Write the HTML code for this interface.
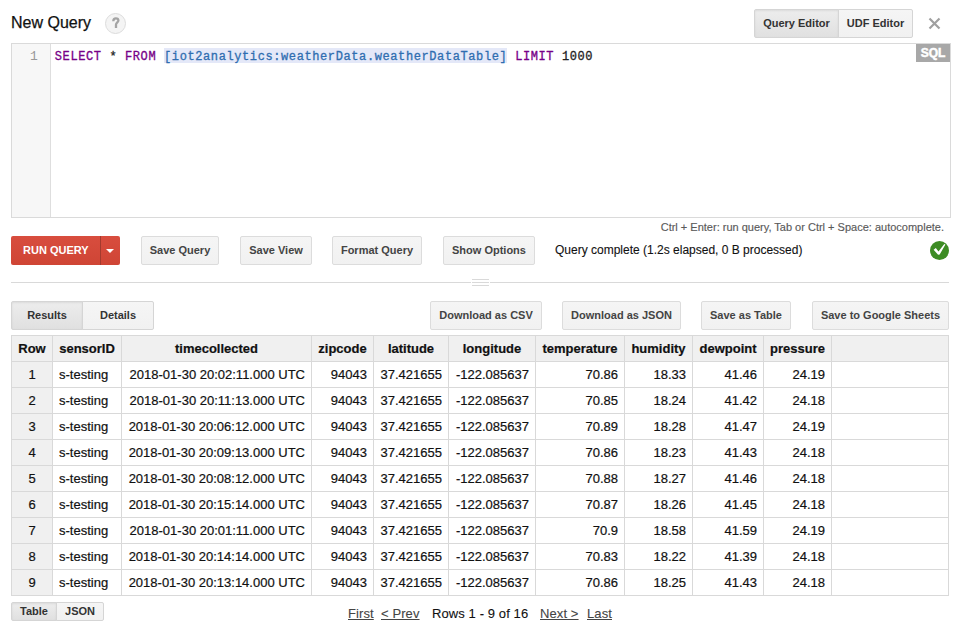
<!DOCTYPE html>
<html><head><meta charset="utf-8">
<style>
*{box-sizing:border-box}
html,body{margin:0;padding:0}
body{width:958px;height:641px;overflow:hidden;background:#fff;position:relative;font-family:"Liberation Sans",sans-serif;color:#222}
div{position:absolute}
.title{-webkit-text-stroke:0.25px #111;left:11px;top:15px;font-size:16px;line-height:16px;color:#111;white-space:nowrap}
.help{left:105px;top:13px;width:21px;height:21px;border-radius:50%;border:1px solid #dcdcdc;background:#f4f4f4;color:#9a9a9a;font-weight:bold;font-size:13px;line-height:19px;text-align:center}
.btn{background:linear-gradient(#f5f5f5,#f1f1f1);border:1px solid #dcdcdc;border-radius:2px;color:#444;font-weight:bold;font-size:11px;text-align:center;white-space:nowrap}
.seg{background:linear-gradient(#f5f5f5,#f1f1f1);border:1px solid #d5d5d5;color:#333;font-weight:bold;font-size:11px;text-align:center;white-space:nowrap}
.seg.on{background:linear-gradient(#ededed,#e0e0e0);box-shadow:inset 0 1px 2px rgba(0,0,0,.08)}
.editor{left:11px;top:43px;width:940px;height:175px;border:1px solid #dadada;background:#fff}
.gutter{left:0;top:0;width:39px;height:173px;background:#f7f7f7;border-right:1px solid #dedede}
.lnum{left:19px;top:5px;font-family:"Liberation Mono",monospace;font-size:13px;line-height:15px;color:#999}
.code{left:54.8px;top:49px;font-family:"Liberation Mono",monospace;font-size:12px;letter-spacing:0.6px;line-height:16px;white-space:pre;color:#222;-webkit-text-stroke:0.3px currentColor}
.kw{color:#770088}
.hl{color:#2f6db0}
.hlbg{left:164px;top:48px;width:343px;height:15px;background:#e4e8f8}
.sql{left:916px;top:44px;width:34px;height:18px;background:#a8a8a8;color:#fff;font-weight:bold;font-size:12px;line-height:18px;text-align:center;-webkit-text-stroke:0.5px #fff}
.hint{-webkit-text-stroke:0.15px #5a5a5a;left:559px;width:385px;top:222px;font-size:11px;line-height:11px;color:#5a5a5a;text-align:right;white-space:nowrap}
.run{left:11px;top:236px;width:109px;height:29px;background:linear-gradient(#d84d3e,#cf4535);border-radius:2px;color:#fff;font-weight:bold;font-size:11px;line-height:29px;white-space:nowrap}
.status{-webkit-text-stroke:0.1px #111;left:555px;top:244px;font-size:12px;line-height:12px;color:#111;white-space:nowrap}
.check{left:930px;top:241px;width:19px;height:19px;border-radius:50%;background:#3d8c24}
.ln{background:#d9d9d9}
.bg{}
.cell{-webkit-text-stroke:0.2px #111;font-size:13px;line-height:28px;color:#111;white-space:nowrap;height:26px;padding-top:0}
.cell.b{font-weight:bold}
.small{background:#f3f3f3;border:1px solid #d5d5d5;color:#333;font-weight:bold;font-size:11px;text-align:center;white-space:nowrap}
.pg{-webkit-text-stroke:0.1px currentColor;letter-spacing:0.1px;top:607px;font-size:13px;line-height:13px;color:#111;white-space:nowrap}
.lk{color:#444;text-decoration:underline;text-underline-offset:1px}
</style></head><body>
<div class="title">New Query</div>
<div class="help"></div><svg style="position:absolute;left:0;top:0" width="140" height="40"><path d="M113.3 21.2 C113.3 19.3 114.4 18.3 115.9 18.3 C117.5 18.3 118.4 19.3 118.4 20.5 C118.4 22.1 116.2 22.6 116 24.5 L116 28" stroke="#a4a4a4" stroke-width="2.3" fill="none"/></svg>
<div class="seg on" style="left:754px;top:9px;width:85px;height:29px;line-height:27px;border-radius:2px 0 0 2px">Query Editor</div>
<div class="seg" style="left:838px;top:9px;width:75px;height:29px;line-height:27px;border-radius:0 2px 2px 0">UDF Editor</div>
<svg style="position:absolute;left:926px;top:15px" width="17" height="17" viewBox="0 0 17 17"><path d="M3.5 3.5 L13.5 13.5 M13.5 3.5 L3.5 13.5" stroke="#a0a0a0" stroke-width="2.2"/></svg>
<div class="editor">
  <div class="gutter"></div>
</div>
<div class="lnum" style="left:30px;top:49px">1</div>
<div class="hlbg"></div>
<div class="code"><span class="kw">SELECT</span> * <span class="kw">FROM</span> <span class="hl">[iot2analytics:weatherData.weatherDataTable]</span> <span class="kw">LIMIT</span> 1000</div>
<div class="sql">SQL</div>
<div class="hint">Ctrl + Enter: run query, Tab or Ctrl + Space: autocomplete.</div>
<div class="run"><span style="position:absolute;left:12px;top:0">RUN QUERY</span><div style="left:89px;top:0;width:1px;height:29px;background:#a33a2e"></div>
<svg style="position:absolute;left:95px;top:12px" width="9" height="6" viewBox="0 0 9 6"><path d="M0 1 L8 1 L4 5 Z" fill="#fff"/></svg></div>
<div class="btn" style="left:141px;top:236px;width:78px;height:29px;line-height:27px">Save Query</div>
<div class="btn" style="left:240px;top:236px;width:72px;height:29px;line-height:27px">Save View</div>
<div class="btn" style="left:332px;top:236px;width:90px;height:29px;line-height:27px">Format Query</div>
<div class="btn" style="left:443px;top:236px;width:92px;height:29px;line-height:27px">Show Options</div>
<div class="btn" style="left:430px;top:301px;width:112px;height:29px;line-height:27px">Download as CSV</div>
<div class="btn" style="left:562px;top:301px;width:119px;height:29px;line-height:27px">Download as JSON</div>
<div class="btn" style="left:701px;top:301px;width:90px;height:29px;line-height:27px">Save as Table</div>
<div class="btn" style="left:812px;top:301px;width:137px;height:29px;line-height:27px">Save to Google Sheets</div>
<div class="status">Query complete (1.2s elapsed, 0 B processed)</div>
<div class="check"><svg style="position:absolute;left:0;top:0" width="19" height="19" viewBox="0 0 19 19"><path d="M3.6 8.7 L5.8 7.1 L8.5 10.5 L14.3 2.9 L15.4 3.4 L9.7 13.5 L8.1 13.7 Z" fill="#fff"/></svg></div>
<div class="ln" style="left:11px;top:282px;width:460px;height:1px"></div>
<div class="ln" style="left:490px;top:282px;width:459px;height:1px"></div>
<div class="ln" style="left:472px;top:279px;width:17px;height:1px"></div>
<div class="ln" style="left:472px;top:282px;width:17px;height:1px"></div>
<div class="ln" style="left:472px;top:285px;width:17px;height:1px"></div>
<div class="seg on" style="left:11px;top:301px;width:72px;height:29px;line-height:27px;border-radius:2px 0 0 2px">Results</div>
<div class="seg" style="left:82px;top:301px;width:72px;height:29px;line-height:27px;border-radius:0 2px 2px 0">Details</div>
<div class="bg" style="left:11px;top:335px;width:938px;height:26px;background:#f0f0f0"></div>
<div class="bg" style="left:11px;top:335px;width:42px;height:261px;background:#f0f0f0"></div>
<div class="ln" style="left:11px;top:335px;width:938px;height:1px"></div>
<div class="ln" style="left:11px;top:361px;width:938px;height:1px"></div>
<div class="ln" style="left:11px;top:387px;width:938px;height:1px"></div>
<div class="ln" style="left:11px;top:413px;width:938px;height:1px"></div>
<div class="ln" style="left:11px;top:439px;width:938px;height:1px"></div>
<div class="ln" style="left:11px;top:465px;width:938px;height:1px"></div>
<div class="ln" style="left:11px;top:491px;width:938px;height:1px"></div>
<div class="ln" style="left:11px;top:517px;width:938px;height:1px"></div>
<div class="ln" style="left:11px;top:543px;width:938px;height:1px"></div>
<div class="ln" style="left:11px;top:569px;width:938px;height:1px"></div>
<div class="ln" style="left:11px;top:595px;width:938px;height:1px"></div>
<div class="ln" style="left:11px;top:335px;width:1px;height:261px"></div>
<div class="ln" style="left:52px;top:335px;width:1px;height:261px"></div>
<div class="ln" style="left:121px;top:335px;width:1px;height:261px"></div>
<div class="ln" style="left:311px;top:335px;width:1px;height:261px"></div>
<div class="ln" style="left:373px;top:335px;width:1px;height:261px"></div>
<div class="ln" style="left:448px;top:335px;width:1px;height:261px"></div>
<div class="ln" style="left:535px;top:335px;width:1px;height:261px"></div>
<div class="ln" style="left:624px;top:335px;width:1px;height:261px"></div>
<div class="ln" style="left:692px;top:335px;width:1px;height:261px"></div>
<div class="ln" style="left:763px;top:335px;width:1px;height:261px"></div>
<div class="ln" style="left:831px;top:335px;width:1px;height:261px"></div>
<div class="ln" style="left:948px;top:335px;width:1px;height:261px"></div>
<div class="cell b" style="left:12px;width:40px;text-align:center;top:335px">Row</div>
<div class="cell b" style="left:53px;width:68px;text-align:center;top:335px">sensorID</div>
<div class="cell b" style="left:122px;width:189px;text-align:center;top:335px">timecollected</div>
<div class="cell b" style="left:312px;width:61px;text-align:center;top:335px">zipcode</div>
<div class="cell b" style="left:374px;width:74px;text-align:center;top:335px">latitude</div>
<div class="cell b" style="left:449px;width:86px;text-align:center;top:335px">longitude</div>
<div class="cell b" style="left:536px;width:88px;text-align:center;top:335px">temperature</div>
<div class="cell b" style="left:625px;width:67px;text-align:center;top:335px">humidity</div>
<div class="cell b" style="left:693px;width:70px;text-align:center;top:335px">dewpoint</div>
<div class="cell b" style="left:764px;width:67px;text-align:center;top:335px">pressure</div>
<div class="cell" style="left:12px;width:40px;text-align:center;top:361px">1</div>
<div class="cell" style="left:59px;width:61px;text-align:left;top:361px">s-testing</div>
<div class="cell" style="left:122px;width:183px;text-align:right;top:361px">2018-01-30 20:02:11.000 UTC</div>
<div class="cell" style="left:312px;width:55px;text-align:right;top:361px">94043</div>
<div class="cell" style="left:374px;width:68px;text-align:right;top:361px">37.421655</div>
<div class="cell" style="left:449px;width:80px;text-align:right;top:361px">-122.085637</div>
<div class="cell" style="left:536px;width:82px;text-align:right;top:361px">70.86</div>
<div class="cell" style="left:625px;width:61px;text-align:right;top:361px">18.33</div>
<div class="cell" style="left:693px;width:64px;text-align:right;top:361px">41.46</div>
<div class="cell" style="left:764px;width:61px;text-align:right;top:361px">24.19</div>
<div class="cell" style="left:12px;width:40px;text-align:center;top:387px">2</div>
<div class="cell" style="left:59px;width:61px;text-align:left;top:387px">s-testing</div>
<div class="cell" style="left:122px;width:183px;text-align:right;top:387px">2018-01-30 20:11:13.000 UTC</div>
<div class="cell" style="left:312px;width:55px;text-align:right;top:387px">94043</div>
<div class="cell" style="left:374px;width:68px;text-align:right;top:387px">37.421655</div>
<div class="cell" style="left:449px;width:80px;text-align:right;top:387px">-122.085637</div>
<div class="cell" style="left:536px;width:82px;text-align:right;top:387px">70.85</div>
<div class="cell" style="left:625px;width:61px;text-align:right;top:387px">18.24</div>
<div class="cell" style="left:693px;width:64px;text-align:right;top:387px">41.42</div>
<div class="cell" style="left:764px;width:61px;text-align:right;top:387px">24.18</div>
<div class="cell" style="left:12px;width:40px;text-align:center;top:413px">3</div>
<div class="cell" style="left:59px;width:61px;text-align:left;top:413px">s-testing</div>
<div class="cell" style="left:122px;width:183px;text-align:right;top:413px">2018-01-30 20:06:12.000 UTC</div>
<div class="cell" style="left:312px;width:55px;text-align:right;top:413px">94043</div>
<div class="cell" style="left:374px;width:68px;text-align:right;top:413px">37.421655</div>
<div class="cell" style="left:449px;width:80px;text-align:right;top:413px">-122.085637</div>
<div class="cell" style="left:536px;width:82px;text-align:right;top:413px">70.89</div>
<div class="cell" style="left:625px;width:61px;text-align:right;top:413px">18.28</div>
<div class="cell" style="left:693px;width:64px;text-align:right;top:413px">41.47</div>
<div class="cell" style="left:764px;width:61px;text-align:right;top:413px">24.19</div>
<div class="cell" style="left:12px;width:40px;text-align:center;top:439px">4</div>
<div class="cell" style="left:59px;width:61px;text-align:left;top:439px">s-testing</div>
<div class="cell" style="left:122px;width:183px;text-align:right;top:439px">2018-01-30 20:09:13.000 UTC</div>
<div class="cell" style="left:312px;width:55px;text-align:right;top:439px">94043</div>
<div class="cell" style="left:374px;width:68px;text-align:right;top:439px">37.421655</div>
<div class="cell" style="left:449px;width:80px;text-align:right;top:439px">-122.085637</div>
<div class="cell" style="left:536px;width:82px;text-align:right;top:439px">70.86</div>
<div class="cell" style="left:625px;width:61px;text-align:right;top:439px">18.23</div>
<div class="cell" style="left:693px;width:64px;text-align:right;top:439px">41.43</div>
<div class="cell" style="left:764px;width:61px;text-align:right;top:439px">24.18</div>
<div class="cell" style="left:12px;width:40px;text-align:center;top:465px">5</div>
<div class="cell" style="left:59px;width:61px;text-align:left;top:465px">s-testing</div>
<div class="cell" style="left:122px;width:183px;text-align:right;top:465px">2018-01-30 20:08:12.000 UTC</div>
<div class="cell" style="left:312px;width:55px;text-align:right;top:465px">94043</div>
<div class="cell" style="left:374px;width:68px;text-align:right;top:465px">37.421655</div>
<div class="cell" style="left:449px;width:80px;text-align:right;top:465px">-122.085637</div>
<div class="cell" style="left:536px;width:82px;text-align:right;top:465px">70.88</div>
<div class="cell" style="left:625px;width:61px;text-align:right;top:465px">18.27</div>
<div class="cell" style="left:693px;width:64px;text-align:right;top:465px">41.46</div>
<div class="cell" style="left:764px;width:61px;text-align:right;top:465px">24.18</div>
<div class="cell" style="left:12px;width:40px;text-align:center;top:491px">6</div>
<div class="cell" style="left:59px;width:61px;text-align:left;top:491px">s-testing</div>
<div class="cell" style="left:122px;width:183px;text-align:right;top:491px">2018-01-30 20:15:14.000 UTC</div>
<div class="cell" style="left:312px;width:55px;text-align:right;top:491px">94043</div>
<div class="cell" style="left:374px;width:68px;text-align:right;top:491px">37.421655</div>
<div class="cell" style="left:449px;width:80px;text-align:right;top:491px">-122.085637</div>
<div class="cell" style="left:536px;width:82px;text-align:right;top:491px">70.87</div>
<div class="cell" style="left:625px;width:61px;text-align:right;top:491px">18.26</div>
<div class="cell" style="left:693px;width:64px;text-align:right;top:491px">41.45</div>
<div class="cell" style="left:764px;width:61px;text-align:right;top:491px">24.18</div>
<div class="cell" style="left:12px;width:40px;text-align:center;top:517px">7</div>
<div class="cell" style="left:59px;width:61px;text-align:left;top:517px">s-testing</div>
<div class="cell" style="left:122px;width:183px;text-align:right;top:517px">2018-01-30 20:01:11.000 UTC</div>
<div class="cell" style="left:312px;width:55px;text-align:right;top:517px">94043</div>
<div class="cell" style="left:374px;width:68px;text-align:right;top:517px">37.421655</div>
<div class="cell" style="left:449px;width:80px;text-align:right;top:517px">-122.085637</div>
<div class="cell" style="left:536px;width:82px;text-align:right;top:517px">70.9</div>
<div class="cell" style="left:625px;width:61px;text-align:right;top:517px">18.58</div>
<div class="cell" style="left:693px;width:64px;text-align:right;top:517px">41.59</div>
<div class="cell" style="left:764px;width:61px;text-align:right;top:517px">24.19</div>
<div class="cell" style="left:12px;width:40px;text-align:center;top:543px">8</div>
<div class="cell" style="left:59px;width:61px;text-align:left;top:543px">s-testing</div>
<div class="cell" style="left:122px;width:183px;text-align:right;top:543px">2018-01-30 20:14:14.000 UTC</div>
<div class="cell" style="left:312px;width:55px;text-align:right;top:543px">94043</div>
<div class="cell" style="left:374px;width:68px;text-align:right;top:543px">37.421655</div>
<div class="cell" style="left:449px;width:80px;text-align:right;top:543px">-122.085637</div>
<div class="cell" style="left:536px;width:82px;text-align:right;top:543px">70.83</div>
<div class="cell" style="left:625px;width:61px;text-align:right;top:543px">18.22</div>
<div class="cell" style="left:693px;width:64px;text-align:right;top:543px">41.39</div>
<div class="cell" style="left:764px;width:61px;text-align:right;top:543px">24.18</div>
<div class="cell" style="left:12px;width:40px;text-align:center;top:569px">9</div>
<div class="cell" style="left:59px;width:61px;text-align:left;top:569px">s-testing</div>
<div class="cell" style="left:122px;width:183px;text-align:right;top:569px">2018-01-30 20:13:14.000 UTC</div>
<div class="cell" style="left:312px;width:55px;text-align:right;top:569px">94043</div>
<div class="cell" style="left:374px;width:68px;text-align:right;top:569px">37.421655</div>
<div class="cell" style="left:449px;width:80px;text-align:right;top:569px">-122.085637</div>
<div class="cell" style="left:536px;width:82px;text-align:right;top:569px">70.86</div>
<div class="cell" style="left:625px;width:61px;text-align:right;top:569px">18.25</div>
<div class="cell" style="left:693px;width:64px;text-align:right;top:569px">41.43</div>
<div class="cell" style="left:764px;width:61px;text-align:right;top:569px">24.18</div>
<div class="seg on" style="left:11px;top:602px;width:46px;height:19px;line-height:17px;border-radius:2px 0 0 2px">Table</div>
<div class="seg" style="left:56px;top:602px;width:48px;height:19px;line-height:17px;border-radius:0 2px 2px 0">JSON</div>
<div class="pg lk" style="left:348px">First</div>
<div class="pg lk" style="left:381px">&lt; Prev</div>
<div class="pg" style="left:432px">Rows 1 - 9 of 16</div>
<div class="pg lk" style="left:540px">Next &gt;</div>
<div class="pg lk" style="left:587px">Last</div>
</body></html>
